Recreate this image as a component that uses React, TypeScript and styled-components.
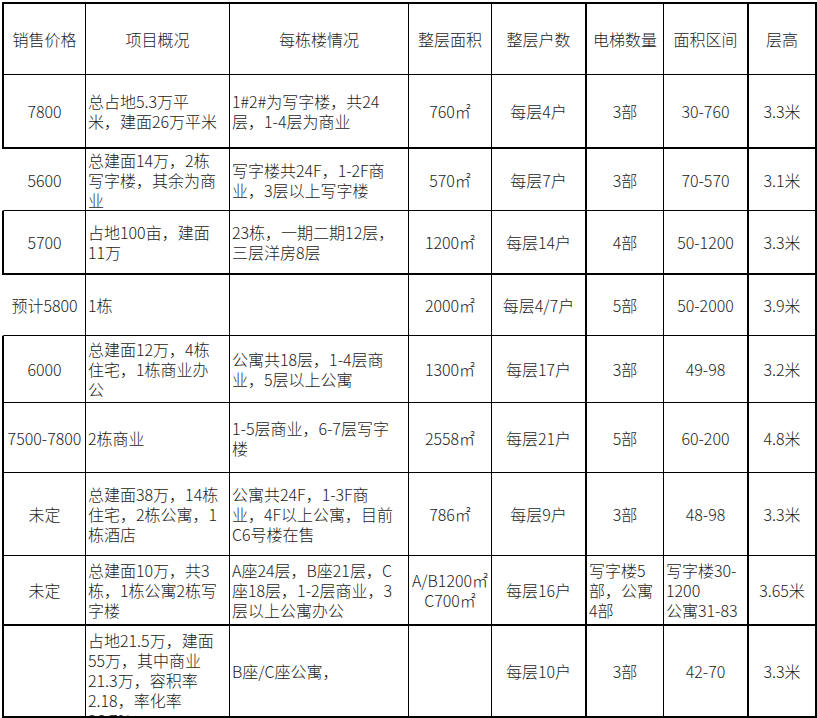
import React from 'react';
import styled, { createGlobalStyle } from 'styled-components';

const GlobalStyle = createGlobalStyle`
  html, body {
    margin: 0;
    padding: 0;
    background: #ffffff;
  }
  body {
    font-family: "Noto Sans CJK SC", "Noto Sans", sans-serif;
    color: #1c1c1c;
  }
`;

// column widths include the right border of each column
const COLS = [84, 144, 179, 83, 95, 77, 85, 68];
const COL_RIGHT = [1, 1, 1, 1, 2, 1, 2, 2];

type Align = 'left' | 'center';

type CellData = {
  text: string;
  align?: Align;
  top?: boolean;
};

type RowData = {
  height: number;
  bottom: number;
  left: boolean;
  cells: (string | CellData)[];
};

const HEADER: RowData = {
  height: 73,
  bottom: 1,
  left: true,
  cells: ['销售价格', '项目概况', '每栋楼情况', '整层面积', '整层户数', '电梯数量', '面积区间', '层高'],
};

const L = (text: string, top = false): CellData => ({ text, align: 'left', top });

const ROWS: RowData[] = [
  {
    height: 74,
    bottom: 2,
    left: true,
    cells: ['7800', L('总占地5.3万平\n米，建面26万平米'), L('1#2#为写字楼，共24\n层，1-4层为商业'), '760㎡', '每层4户', '3部', '30-760', '3.3米'],
  },
  {
    height: 62,
    bottom: 1,
    left: false,
    cells: ['5600', L('总建面14万，2栋\n写字楼，其余为商\n业'), L('写字楼共24F，1-2F商\n业，3层以上写字楼'), '570㎡', '每层7户', '3部', '70-570', '3.1米'],
  },
  {
    height: 64,
    bottom: 2,
    left: true,
    cells: ['5700', L('占地100亩，建面\n11万'), L('23栋，一期二期12层，\n三层洋房8层'), '1200㎡', '每层14户', '4部', '50-1200', '3.3米'],
  },
  {
    height: 61,
    bottom: 1,
    left: false,
    cells: ['预计5800', L('1栋'), L(''), '2000㎡', '每层4/7户', '5部', '50-2000', '3.9米'],
  },
  {
    height: 67,
    bottom: 1,
    left: true,
    cells: ['6000', L('总建面12万，4栋\n住宅，1栋商业办\n公'), L('公寓共18层，1-4层商\n业，5层以上公寓'), '1300㎡', '每层17户', '3部', '49-98', '3.2米'],
  },
  {
    height: 70,
    bottom: 1,
    left: true,
    cells: ['7500-7800', L('2栋商业'), L('1-5层商业，6-7层写字\n楼'), '2558㎡', '每层21户', '5部', '60-200', '4.8米'],
  },
  {
    height: 83,
    bottom: 1,
    left: true,
    cells: ['未定', L('总建面38万，14栋\n住宅，2栋公寓，1\n栋酒店'), L('公寓共24F，1-3F商\n业，4F以上公寓，目前\nC6号楼在售'), '786㎡', '每层9户', '3部', '48-98', '3.3米'],
  },
  {
    height: 70,
    bottom: 2,
    left: true,
    cells: ['未定', L('总建面10万，共3\n栋，1栋公寓2栋写\n字楼'), L('A座24层，B座21层，C\n座18层，1-2层商业，3\n层以上公寓办公'), 'A/B1200㎡\nC700㎡', '每层16户', L('写字楼5\n部，公寓\n4部'), L('写字楼30-\n1200\n公寓31-83'), '3.65米'],
  },
  {
    height: 92,
    bottom: 2,
    left: true,
    cells: ['', L('占地21.5万，建面\n55万，其中商业\n21.3万，容积率\n2.18，率化率\n36.7%', true), L('B座/C座公寓，'), '', '每层10户', '3部', '42-70', '3.3米'],
  },
];

const Page = styled.div`
  padding: 2px 0 0 2px;
`;

const Sheet = styled.div<{ $cols: number[]; $rows: number[] }>`
  display: grid;
  grid-template-columns: ${({ $cols }) => $cols.map((c) => `${c}px`).join(' ')};
  grid-template-rows: ${({ $rows }) => $rows.map((r) => `${r}px`).join(' ')};
`;

const Cell = styled.div<{
  $right: number;
  $bottom: number;
  $left?: number;
  $top?: number;
  $align: Align;
  $valignTop?: boolean;
}>`
  box-sizing: border-box;
  display: flex;
  align-items: ${({ $valignTop }) => ($valignTop ? 'flex-start' : 'center')};
  justify-content: ${({ $align }) => ($align === 'left' ? 'flex-start' : 'center')};
  text-align: ${({ $align }) => $align};
  padding: ${({ $align, $valignTop }) =>
    `${$valignTop ? 4 : 0}px ${$align === 'left' ? 1 : 0}px 0 ${$align === 'left' ? 2 : 0}px`};
  overflow: hidden;
  white-space: pre-line;
  font-size: 16px;
  font-weight: 300;
  line-height: 20px;
  color: #1c1c1c;
  border-right: ${({ $right }) => $right}px solid #000;
  border-bottom: ${({ $bottom }) => $bottom}px solid #000;
  border-left: ${({ $left }) => ($left === undefined ? 'none' : `2px solid ${$left ? '#000' : 'transparent'}`)};
  border-top: ${({ $top }) => ($top ? `${$top}px solid #000` : 'none')};
`;

const toCell = (c: string | CellData): CellData => (typeof c === 'string' ? { text: c, align: 'center' } : c);

const renderRow = (row: RowData, key: string, header = false) =>
  row.cells.map((raw, i) => {
    const c = toCell(raw);
    return (
      <Cell
        key={`${key}-${i}`}
        $right={COL_RIGHT[i]}
        $bottom={row.bottom}
        $left={i === 0 ? (row.left ? 1 : 0) : undefined}
        $top={header ? 2 : undefined}
        $align={header ? 'center' : c.align ?? 'center'}
        $valignTop={c.top}
      >
        {c.text}
      </Cell>
    );
  });

export default function App() {
  const rows = [HEADER, ...ROWS];
  return (
    <>
      <GlobalStyle />
      <Page>
        <Sheet $cols={COLS} $rows={rows.map((r) => r.height)}>
          {renderRow(HEADER, 'h', true)}
          {ROWS.map((r, idx) => renderRow(r, `r${idx}`))}
        </Sheet>
      </Page>
    </>
  );
}
